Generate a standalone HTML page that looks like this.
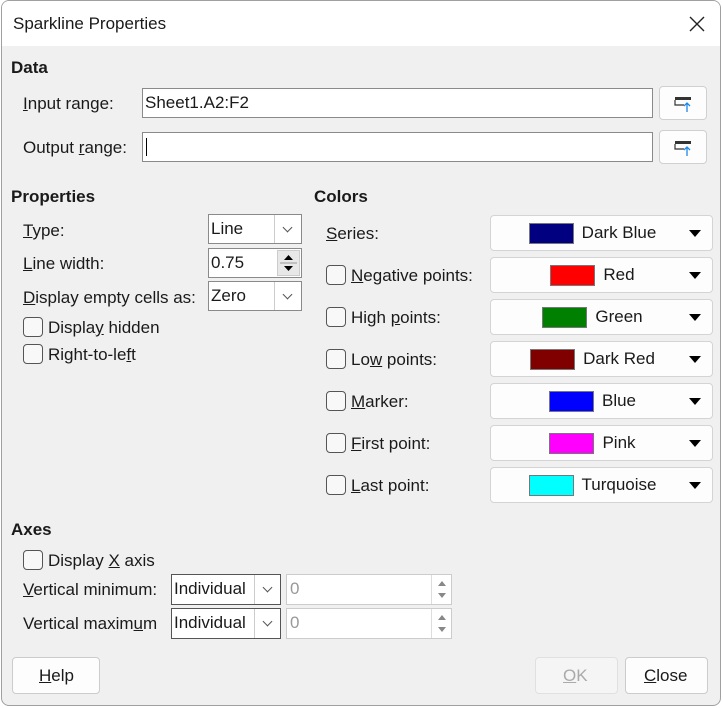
<!DOCTYPE html>
<html><head><meta charset="utf-8"><style>
*{box-sizing:border-box;margin:0;padding:0}
body{width:723px;height:708px;background:#fff;font-family:"Liberation Sans",sans-serif;font-size:17px;color:#1a1a1a;position:relative;overflow:hidden}
.dlg{position:absolute;left:1px;top:0;width:720px;height:706px;background:#f0f0f0;border:1px solid #a0a0a0;border-radius:8px;overflow:hidden}
.title{position:absolute;left:0;top:0;width:100%;height:45px;background:#fff}
.a{position:absolute;white-space:nowrap;line-height:20px;margin-top:1px}
.b{font-weight:bold}
.box{position:absolute;background:#fff;border:1px solid #8a8a8a}
.btn{position:absolute;background:#fdfdfd;border:1px solid #d0d0d0;border-radius:4px}
.cb{position:absolute;width:20px;height:20px;border:1px solid #555;border-radius:4px;background:#f8f8f8}
.cbtn{position:absolute;left:488px;width:223px;height:36px;background:#fdfdfd;border:1px solid #d4d4d4;border-radius:4px;display:flex;align-items:center;justify-content:center;padding-right:18px}
.sw{width:45px;height:21px;border:1px solid #777;margin-right:8px}
.arr{position:absolute;right:11px;top:14px;width:0;height:0;border-left:6px solid transparent;border-right:6px solid transparent;border-top:7px solid #000}
u{text-decoration:underline}
.dd{position:absolute;top:0;bottom:0;border-left:1px solid #ccc;width:27px}
.dd:after{content:"";position:absolute;left:9px;top:9px;width:6px;height:6px;border-right:1px solid #555;border-bottom:1px solid #555;transform:rotate(45deg)}
</style></head><body>
<div class="dlg">
<div class="title"></div>
<div class="a" style="left:11px;top:12px">Sparkline Properties</div>
<svg style="position:absolute;left:687px;top:15px" width="16" height="16"><path d="M1 1L15 15M15 1L1 15" stroke="#222" stroke-width="1.4"/></svg>

<div class="a b" style="left:9px;top:56px">Data</div>
<div class="a" style="left:21px;top:92px"><u>I</u>nput range:</div>
<div class="box" style="left:140px;top:87px;width:511px;height:30px"><div class="a" style="left:2px;top:3px">Sheet1.A2:F2</div></div>
<div class="btn" style="left:657px;top:85px;width:48px;height:34px"><svg style="position:absolute;left:14px;top:9px" width="22" height="17"><rect x="1" y="1" width="16" height="3" fill="#333"/><path d="M1 4V9H10" fill="none" stroke="#333" stroke-width="1.2"/><path d="M13 16V7M10 10L13 7L16 10" fill="none" stroke="#1e88e5" stroke-width="1.3"/></svg></div>
<div class="a" style="left:21px;top:136px">Output <u>r</u>ange:</div>
<div class="box" style="left:140px;top:131px;width:511px;height:30px"><div style="position:absolute;left:3px;top:5px;width:1px;height:18px;background:#000"></div></div>
<div class="btn" style="left:657px;top:129px;width:48px;height:34px"><svg style="position:absolute;left:14px;top:9px" width="22" height="17"><rect x="1" y="1" width="16" height="3" fill="#333"/><path d="M1 4V9H10" fill="none" stroke="#333" stroke-width="1.2"/><path d="M13 16V7M10 10L13 7L16 10" fill="none" stroke="#1e88e5" stroke-width="1.3"/></svg></div>

<div class="a b" style="left:9px;top:185px">Properties</div>
<div class="a b" style="left:312px;top:185px">Colors</div>

<div class="a" style="left:21px;top:219px"><u>T</u>ype:</div>
<div class="box" style="left:206px;top:213px;width:94px;height:30px"><div class="a" style="left:2px;top:3px">Line</div><div class="dd" style="right:0"></div></div>
<div class="a" style="left:21px;top:252px"><u>L</u>ine width:</div>
<div class="box" style="left:206px;top:247px;width:94px;height:30px"><div class="a" style="left:2px;top:3px">0.75</div>
<div style="position:absolute;right:1px;top:1px;width:23px;height:26px;background:#e8e8e8;border:1px solid #ccc"><svg width="21" height="24"><path d="M6 9L10.5 4L15 9Z M6 15L10.5 20L15 15Z" fill="#000"/><path d="M2 12H19" stroke="#999"/></svg></div></div>
<div class="a" style="left:21px;top:286px"><u>D</u>isplay empty cells as:</div>
<div class="box" style="left:206px;top:280px;width:94px;height:30px"><div class="a" style="left:2px;top:3px">Zero</div><div class="dd" style="right:0"></div></div>
<div class="cb" style="left:21px;top:316px"></div><div class="a" style="left:46px;top:316px">Displa<u>y</u> hidden</div>
<div class="cb" style="left:21px;top:343px"></div><div class="a" style="left:46px;top:343px">Right-to-le<u>f</u>t</div>

<div class="a" style="left:324px;top:222px"><u>S</u>eries:</div>
<div class="cbtn" style="top:214px"><div class="sw" style="background:#000080"></div>Dark Blue<div class="arr"></div></div>
<div class="cb" style="left:324px;top:264px"></div><div class="a" style="left:349px;top:264px"><u>N</u>egative points:</div>
<div class="cbtn" style="top:256px"><div class="sw" style="background:#ff0000"></div>Red<div class="arr"></div></div>
<div class="cb" style="left:324px;top:306px"></div><div class="a" style="left:349px;top:306px">High <u>p</u>oints:</div>
<div class="cbtn" style="top:298px"><div class="sw" style="background:#008000"></div>Green<div class="arr"></div></div>
<div class="cb" style="left:324px;top:348px"></div><div class="a" style="left:349px;top:348px">Lo<u>w</u> points:</div>
<div class="cbtn" style="top:340px"><div class="sw" style="background:#800000"></div>Dark Red<div class="arr"></div></div>
<div class="cb" style="left:324px;top:390px"></div><div class="a" style="left:349px;top:390px"><u>M</u>arker:</div>
<div class="cbtn" style="top:382px"><div class="sw" style="background:#0000ff"></div>Blue<div class="arr"></div></div>
<div class="cb" style="left:324px;top:432px"></div><div class="a" style="left:349px;top:432px"><u>F</u>irst point:</div>
<div class="cbtn" style="top:424px"><div class="sw" style="background:#ff00ff"></div>Pink<div class="arr"></div></div>
<div class="cb" style="left:324px;top:474px"></div><div class="a" style="left:349px;top:474px"><u>L</u>ast point:</div>
<div class="cbtn" style="top:466px"><div class="sw" style="background:#00ffff"></div>Turquoise<div class="arr"></div></div>

<div class="a b" style="left:9px;top:518px">Axes</div>
<div class="cb" style="left:21px;top:549px"></div><div class="a" style="left:46px;top:549px">Display <u>X</u> axis</div>
<div class="a" style="left:21px;top:578px"><u>V</u>ertical minimum:</div>
<div class="box" style="left:169px;top:573px;width:110px;height:31px;border-color:#555"><div class="a" style="left:2px;top:3px">Individual</div><div class="dd" style="right:0;width:26px"></div></div>
<div class="box" style="left:284px;top:573px;width:166px;height:31px;border-color:#ccc"><div class="a" style="left:3px;top:3px;color:#999">0</div><div style="position:absolute;right:0;top:0;width:20px;height:29px;border-left:1px solid #ddd"><svg width="20" height="29"><path d="M6 11L10 6L14 11Z M6 18L10 23L14 18Z" fill="#888"/></svg></div></div>
<div class="a" style="left:21px;top:612px">Vertical maxim<u>u</u>m</div>
<div class="box" style="left:169px;top:607px;width:110px;height:31px;border-color:#555"><div class="a" style="left:2px;top:3px">Individual</div><div class="dd" style="right:0;width:26px"></div></div>
<div class="box" style="left:284px;top:607px;width:166px;height:31px;border-color:#ccc"><div class="a" style="left:3px;top:3px;color:#999">0</div><div style="position:absolute;right:0;top:0;width:20px;height:29px;border-left:1px solid #ddd"><svg width="20" height="29"><path d="M6 11L10 6L14 11Z M6 18L10 23L14 18Z" fill="#888"/></svg></div></div>

<div class="btn" style="left:10px;top:656px;width:88px;height:37px;border-color:#ccc"><div class="a" style="left:26px;top:7px"><u>H</u>elp</div></div>
<div class="btn" style="left:533px;top:656px;width:83px;height:37px;background:#f5f5f5;border-color:#e0e0e0"><div class="a" style="left:27px;top:7px;color:#aaa"><u>O</u>K</div></div>
<div class="btn" style="left:623px;top:656px;width:83px;height:37px;border-color:#ccc"><div class="a" style="left:18px;top:7px"><u>C</u>lose</div></div>
</div>
</body></html>
